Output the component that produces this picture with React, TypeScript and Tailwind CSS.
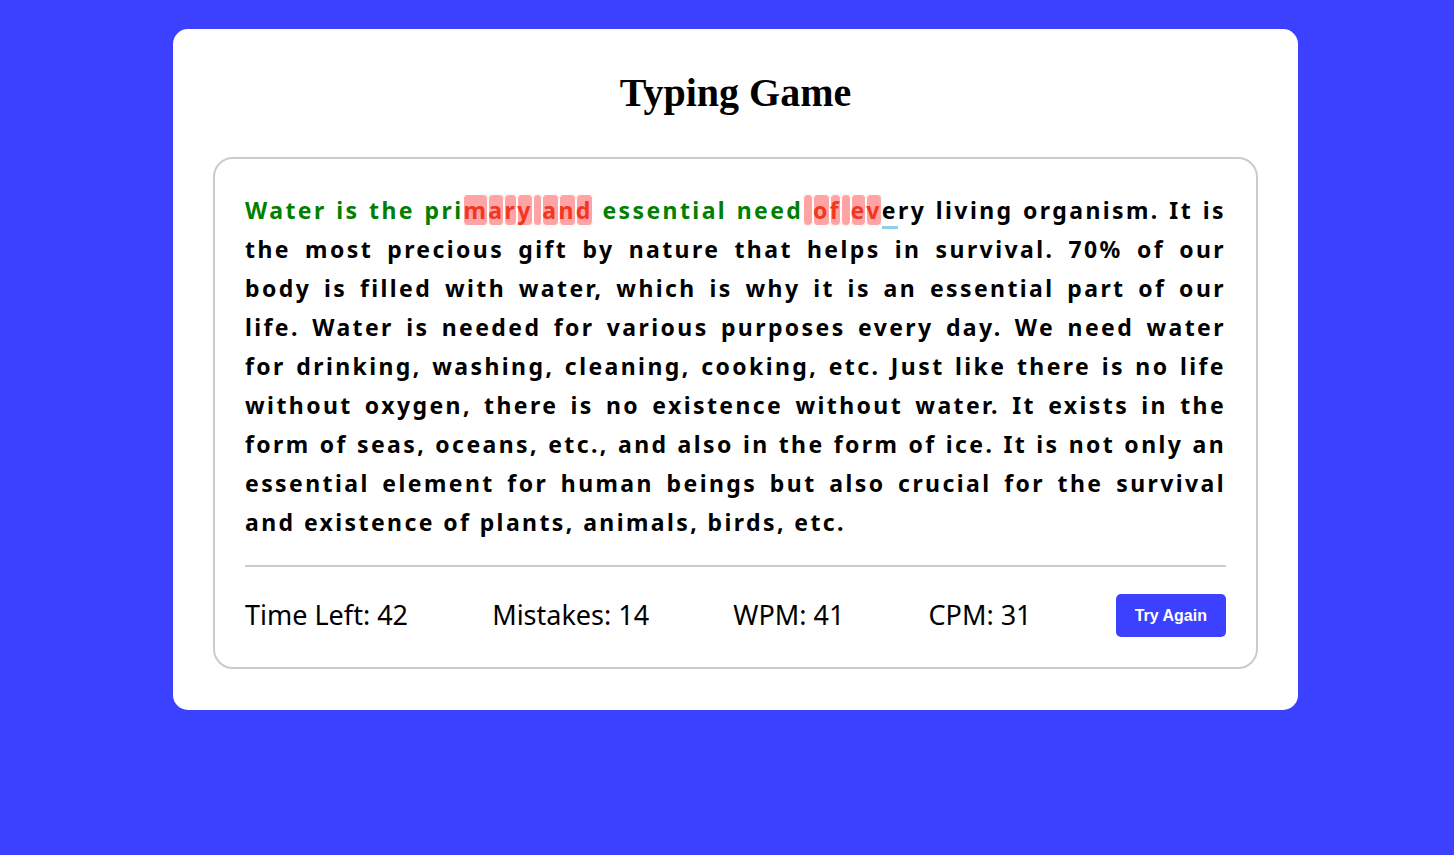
import React from 'react';

const PARAGRAPH =
  'Water is the primary and essential need of every living organism. It is the most precious gift by nature that helps in survival. 70% of our body is filled with water, which is why it is an essential part of our life. Water is needed for various purposes every day. We need water for drinking, washing, cleaning, cooking, etc. Just like there is no life without oxygen, there is no existence without water. It exists in the form of seas, oceans, etc., and also in the form of ice. It is not only an essential element for human beings but also crucial for the survival and existence of plants, animals, birds, etc.';

// typed state: index -> correct / incorrect
const typed: Record<number, boolean> = {};
for (let i = 0; i < 16; i++) typed[i] = true;
for (let i = 16; i < 24; i++) typed[i] = false;
for (let i = 24; i < 39; i++) typed[i] = true;
for (let i = 39; i < 45; i++) typed[i] = false;
const cursor = 45;

const Char: React.FC<{ ch: string; idx: number }> = ({ ch, idx }) => {
  const state = typed[idx];
  if (state === true) return <span className="text-[#008000]">{ch}</span>;
  if (state === false)
    return (
      <span className="text-[#f2361f] bg-[#ffa4a4] ring-1 ring-inset ring-white rounded-[5px]">{ch}</span>
    );
  if (idx === cursor) return <span className="border-b-[3px] border-[#8fd0e6]">{ch}</span>;
  return <span>{ch}</span>;
};

const Stat: React.FC<{ label: string; value: number }> = ({ label, value }) => (
  <p className="text-[27px] text-black">
    {label}: {value}
  </p>
);

export default function App() {
  return (
    <div className="min-h-[855px] bg-[#3c40ff] pt-[29px] pl-[17px] flex justify-center items-start">
      <div className="w-[1125px] bg-white rounded-[15px] px-10 pt-10 pb-[41px]">
        <h1 className="text-center text-[40px] font-bold text-black leading-[48px] mb-[40px] [font-family:'Liberation_Serif',serif]">
          Typing Game
        </h1>

        <div className="border-2 border-[#cbcbcb] rounded-[20px] px-[30px] pt-[32px] pb-[30px]">
          <p className="text-justify text-[23px] leading-[39px] font-bold tracking-[2.4px] text-black [font-family:'Noto_Sans',sans-serif]">
            {PARAGRAPH.split('').map((ch, i) => (
              <Char key={i} ch={ch} idx={i} />
            ))}
          </p>

          <div className="mt-[23px] border-t-2 border-[#cbcbcb] pt-[27px] flex items-center justify-between [font-family:'Noto_Sans',sans-serif]">
            <Stat label="Time Left" value={42} />
            <Stat label="Mistakes" value={14} />
            <Stat label="WPM" value={41} />
            <Stat label="CPM" value={31} />
            <button className="h-[43px] px-[19px] rounded-[5px] bg-[#3c40ff] text-white text-[16px] font-bold [font-family:'Liberation_Sans',Arial,sans-serif]">
              Try Again
            </button>
          </div>
        </div>
      </div>
    </div>
  );
}
